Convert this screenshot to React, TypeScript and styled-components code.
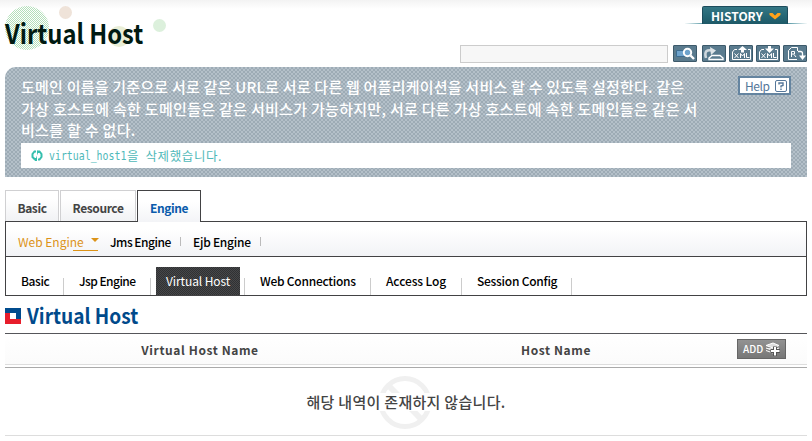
import React from "react";
import styled, { createGlobalStyle } from "styled-components";

const Global = createGlobalStyle`
  * { box-sizing: border-box; }
  body { margin: 0; background: #fff; color: #000; font-family: "Noto Sans CJK KR", "Noto Sans", sans-serif; font-size: 12px; overflow: hidden; }
  svg { display: block; }
`;

const Page = styled.div`
  width: 812px;
  height: 441px;
  padding: 0 5px;
  background: linear-gradient(#f3f3f3, #fff 9px);
`;

const Header = styled.header`
  position: relative;
  height: 67px;
  display: flex;
  justify-content: space-between;
`;
const Bubbles = styled.svg`
  position: absolute;
  left: -5px;
  top: 0;
`;
const Title = styled.h1`
  position: relative;
  margin: 13px 0 0;
  height: 40px;
  font-size: 27px;
  line-height: 40px;
  font-weight: 700;
  transform: scaleX(0.88);
  transform-origin: 0 50%;
  color: #001a12;
  white-space: nowrap;
`;
const HeaderRight = styled.div`
  display: flex;
  flex-direction: column;
  align-items: flex-end;
  padding-top: 6px;
`;
const HistoryBar = styled.div`
  width: 122px;
  height: 18px;
  padding-left: 17px;
  border-bottom: 1px solid;
  border-image: linear-gradient(90deg, #fff, #5e9da9 15%, #5e9da9 85%, #fff) 1;
`;
const HistoryTab = styled.button`
  display: flex;
  align-items: center;
  justify-content: space-between;
  width: 86px;
  height: 18px;
  padding: 1px 6px 0 8px;
  border: 1px solid #1d4c5c;
  border-bottom: 0;
  border-radius: 2px 2px 0 0;
  background: linear-gradient(#347684, #286a78 45%, #1e5967);
  color: #fff;
  font: 700 12px/14px "Noto Sans CJK KR", sans-serif;
  letter-spacing: 0px;
`;
const Tools = styled.div`
  display: flex;
  margin-top: 21px;
`;
const Search = styled.input`
  width: 208px;
  height: 18px;
  margin-right: 5px;
  border: 1px solid #ccc;
  background: #f7f7f7;
`;
const Tool = styled.button<{ $gap: number }>`
  width: 24px;
  height: 17px;
  padding: 0;
  margin-left: ${(p) => p.$gap}px;
  border: 1px solid #3d5a6b;
  border-radius: 1px;
  background: #5a7b8e;
`;

const Intro = styled.section`
  position: relative;
  height: 110px;
  padding: 10px 16px 0;
  border-radius: 11px 0 0 0;
  background: conic-gradient(#9dabb5 25%, #b4c0c9 0 50%, #9dabb5 0 75%, #b4c0c9 0) 0 0 / 4px 4px;
`;
const IntroLine = styled.div<{ $ls: number }>`
  height: 21.5px;
  font-size: 15px;
  line-height: 20px;
  font-weight: 500;
  letter-spacing: ${(p) => p.$ls}px;
  color: #fff;
  white-space: nowrap;
`;
const Help = styled.button`
  position: absolute;
  right: 16px;
  top: 9px;
  display: flex;
  align-items: center;
  justify-content: space-between;
  width: 53px;
  height: 19px;
  padding: 0 2px 0 5px;
  border: 2px solid #6484a0;
  background: #fff;
  color: #55779a;
  font: 400 12px/15px "Noto Sans CJK KR", sans-serif;
  letter-spacing: -0.4px;
`;
const Message = styled.div`
  display: flex;
  align-items: center;
  gap: 6px;
  height: 25px;
  margin-top: 1.5px;
  padding-left: 10px;
  background: #fff;
  color: #4fb9b9;
  line-height: 25px;
  white-space: pre;
`;
const MessageText = styled.span`
  display: flex;
`;
const HostId = styled.span`
  width: 78px;
  font: 12px/26px "DejaVu Sans Mono", monospace;
  transform: scaleX(0.824);
  transform-origin: 0 50%;
`;
const MessageKorean = styled.span`
  font-size: 12.5px;
  font-weight: 400;
  letter-spacing: 0.6px;
  word-spacing: 3px;
`;

const Tabs = styled.nav`
  display: flex;
  gap: 1px;
  height: 32px;
  margin-top: 13px;
`;
const Tab = styled.a<{ $w: number; $active?: boolean }>`
  width: ${(p) => p.$w}px;
  height: ${(p) => (p.$active ? 32 : 31)}px;
  position: relative;
  text-align: center;
  font-size: 12px;
  line-height: 33px;
  font-weight: 700;
  letter-spacing: -0.4px;
  color: ${(p) => (p.$active ? "#0a5bab" : "#444")};
  border: 1px solid ${(p) => (p.$active ? "#424244" : "#d0d0d2")};
  border-bottom: 0;
  background: ${(p) => (p.$active ? "linear-gradient(#fff 35%, #f3f4f7)" : "linear-gradient(#fff 25%, #f1f2f4)")};
`;
const Menus = styled.div`
  height: 75px;
  margin-top: -1px;
  border: 1px solid #424244;
`;
const EngineRow = styled.div`
  display: flex;
  height: 35px;
  border-bottom: 1px solid #424244;
  background: linear-gradient(#fff 20%, #f2f3f6);
`;
const EngineItem = styled.a<{ $w: number; $ls: number; $active?: boolean }>`
  position: relative;
  width: ${(p) => p.$w}px;
  padding-left: 12px;
  font-size: 12px;
  line-height: 40px;
  font-weight: ${(p) => (p.$active ? 400 : 500)};
  letter-spacing: ${(p) => p.$ls}px;
  color: ${(p) => (p.$active ? "#dc9318" : "#000")};
  white-space: nowrap;
`;
const Divider = styled.i`
  position: absolute;
  right: 0;
  top: 15px;
  width: 1px;
  height: 9px;
  background: #bbb;
`;
const Marker = styled.svg`
  position: absolute;
  left: 67px;
  top: 15px;
`;
const PageRow = styled.div`
  display: flex;
  align-items: flex-end;
  height: 38px;
`;
const PageItem = styled.a<{ $w: number; $ls: number; $active?: boolean }>`
  width: ${(p) => p.$w}px;
  height: 28px;
  margin-left: ${(p) => (p.$active ? 5 : 0)}px;
  padding-left: ${(p) => (p.$active ? 10 : 15)}px;
  font-size: 12px;
  line-height: 28px;
  font-weight: ${(p) => (p.$active ? 400 : 500)};
  letter-spacing: ${(p) => p.$ls}px;
  white-space: nowrap;
  color: ${(p) => (p.$active ? "#fff" : "#000")};
  background: ${(p) =>
    p.$active
      ? "conic-gradient(#303133 25%, #464749 0 50%, #303133 0 75%, #464749 0) 0 0 / 2px 2px"
      : "linear-gradient(#ccc, #ccc) 100% 100% / 1px 17px no-repeat"};
`;
const Rule = styled.i`
  width: 1px;
  height: 17px;
  margin-left: 4px;
  background: #ccc;
`;

const SectionHead = styled.div`
  display: flex;
  align-items: center;
  gap: 6px;
  height: 37px;
  padding-top: 3px;
`;
const SectionTitle = styled.h2`
  margin: 0;
  font-size: 21px;
  line-height: 30px;
  padding-bottom: 2px;
  font-weight: 700;
  transform: scaleX(0.91);
  transform-origin: 0 50%;
  color: #004a8b;
`;
const TableHead = styled.div`
  display: grid;
  grid-template-columns: 390px 322px 90px;
  align-items: center;
  height: 32px;
  border-top: 1px solid #55565a;
  border-bottom: 1px solid #ddd;
  background: linear-gradient(#fff, #fbfbfb);
  color: #444;
  font-weight: 700;
  text-align: center;
  letter-spacing: 0.6px;
`;
const Add = styled.button`
  display: flex;
  align-items: center;
  gap: 2px;
  width: 49px;
  height: 20px;
  margin-left: 20px;
  padding: 0 0 0 5px;
  border: 1px solid #666;
  background: linear-gradient(#929292, #777);
  color: #fff;
  font: 500 10px/18px "Noto Sans CJK KR", sans-serif;
`;
const Empty = styled.div`
  position: relative;
  height: 69px;
  margin-top: 2px;
  border-top: 1px solid #aaa;
  border-bottom: 1px solid #ddd;
  text-align: center;
  font-size: 15px;
  font-weight: 500;
  line-height: 68px;
  letter-spacing: 0.3px;
  color: #444;
`;
const NoEntry = styled.svg`
  position: absolute;
  left: 373px;
  top: 7px;
`;
const EmptyText = styled.span`
  position: relative;
  background: linear-gradient(#fff, #fff) 0 50% / 100% 18px no-repeat;
`;

const Xml = () => (
  <g stroke="#fff" fill="none">
    <path d="M7 3.500H4.500L2.500 6v7.500h18v-10H18" />
    <path d="M4.500 7.500l4 4.500M8.500 7.500l-4 4.500M10.500 12V7.500l2 2.500 2-2.500V12M16.500 7v4.500h3" />
  </g>
);

const toolIcons = [
  {
    gap: 0,
    art: (
      <g>
        <path d="M2.500 4.500h8v6h-8z" fill="#6ea3cc" stroke="#3b6c91" />
        <path d="M16.500 9.500l3.500 3.500" stroke="#fff" strokeWidth="2.400" />
        <circle cx="13.500" cy="6.500" r="3.700" fill="#6ea3cc" stroke="#fff" strokeWidth="2" />
      </g>
    ),
  },
  {
    gap: 5,
    art: (
      <g fill="none">
        <path d="M3 12C1 5 4 3.500 9 4.500" strokeWidth="2.600" stroke="#ced7dc" />
        <path d="M7 1l6 3.500L8 9z" fill="#dfe5e8" />
        <path d="M9 9.500h8l3 2.500v1.500H6V12z" stroke="#fff" strokeWidth="1.400" />
      </g>
    ),
  },
  {
    gap: 3,
    art: (
      <g>
        <Xml />
        <path d="M12.500 0L17 4h-3v2.500h-3V4H8z" fill="#fff" />
      </g>
    ),
  },
  {
    gap: 3,
    art: (
      <g>
        <Xml />
        <path d="M11 0h3v2.500h3L12.500 7 8 2.500h3z" fill="#fff" />
      </g>
    ),
  },
  {
    gap: 3,
    art: (
      <g fill="none" stroke="#fff">
        <path d="M13 13.500H4.500v-9L7.500 1.500h6V5M7.500 11V5.500h3v2.500h-3M10 8.500l2 2.500" />
        <path d="M14 5.500h2.500q2 0 2 2V11" strokeWidth="1.300" />
        <path d="M15 9.500h7l-3.500 4.500z" fill="#fff" stroke="none" />
      </g>
    ),
  },
];

export default function App() {
  return (
    <>
      <Global />
      <Page>
        <Header>
          <Bubbles width="180" height="60">
            <defs>
              <pattern id="dots" width="2" height="2" patternUnits="userSpaceOnUse">
                <path d="M0 0h1v1H0zM1 1h1v1H1z" fill="#b3dfba" />
              </pattern>
            </defs>
            <circle cx="27" cy="28" r="22" fill="url(#dots)" />
            <circle cx="65.500" cy="12.500" r="6.500" fill="#efe3d9" />
            <circle cx="119" cy="36.500" r="10.500" fill="#e9eed6" />
            <circle cx="159.500" cy="25.500" r="6.500" fill="#dcf0dc" />
          </Bubbles>
          <Title>Virtual Host</Title>
          <HeaderRight>
            <HistoryBar>
              <HistoryTab>
                HISTORY
                <svg width="12" height="8">
                  <path d="M0.500 1h3L6 3.500 8.500 1h3v2L6 7.500 0.500 3z" fill="#ffa21a" />
                </svg>
              </HistoryTab>
            </HistoryBar>
            <Tools>
              <Search />
              {toolIcons.map((t, i) => (
                <Tool key={i} $gap={t.gap}>
                  <svg width="22" height="15">{t.art}</svg>
                </Tool>
              ))}
            </Tools>
          </HeaderRight>
        </Header>

        <Intro>
          <IntroLine $ls={0.22}>도메인 이름을 기준으로 서로 같은 URL로 서로 다른 웹 어플리케이션을 서비스 할 수 있도록 설정한다. 같은</IntroLine>
          <IntroLine $ls={0.3}>가상 호스트에 속한 도메인들은 같은 서비스가 가능하지만, 서로 다른 가상 호스트에 속한 도메인들은 같은 서</IntroLine>
          <IntroLine $ls={0.3}>비스를 할 수 없다.</IntroLine>
          <Message>
            <svg width="12" height="11">
              <path d="M5 1.500H3.500L1.500 4v3l2 2M7 1.500h1.500l2 2.500v3l-2 2.500H7" fill="none" stroke="#35bfae" strokeWidth="2" />
              <path d="M2 8h3V5.500L6 8v3H4zM10 3H7v2.500L6 3V0z" fill="#35bfae" />
            </svg>
            <MessageText>
              <HostId>virtual_host1</HostId>
              <MessageKorean>을 삭제했습니다.</MessageKorean>
            </MessageText>
          </Message>
          <Help>
            Help
            <svg width="12" height="12" fill="none" stroke="#55779a">
              <rect x="0.500" y="0.500" width="11" height="11" rx="1.500" />
              <path d="M4 4.500V3h4v2.500L6 6v1.500M6 8.500V10" strokeWidth="1.400" />
            </svg>
          </Help>
        </Intro>

        <Tabs>
          <Tab $w={54}>Basic</Tab>
          <Tab $w={76}>Resource</Tab>
          <Tab $w={64} $active>Engine</Tab>
        </Tabs>
        <Menus>
          <EngineRow>
            <EngineItem $w={92} $ls={0} $active>
              Web Engine
              <Marker width="26" height="15">
                <path d="M18 1h8l-4 4z" fill="#dc9318" />
                <path d="M0 13.500h25" stroke="#dc9318" />
              </Marker>
            </EngineItem>
            <EngineItem $w={83} $ls={-0.5}>Jms Engine<Divider /></EngineItem>
            <EngineItem $w={80} $ls={-0.25}>Ejb Engine<Divider /></EngineItem>
          </EngineRow>
          <PageRow>
            <PageItem $w={58} $ls={-0.4}>Basic</PageItem>
            <PageItem $w={87} $ls={-0.55}>Jsp Engine</PageItem>
            <PageItem $w={84} $ls={-0.1} $active>Virtual Host</PageItem>
            <Rule />
            <PageItem $w={126} $ls={-0.25}>Web Connections</PageItem>
            <PageItem $w={91} $ls={-0.1}>Access Log</PageItem>
            <PageItem $w={110} $ls={-0.25}>Session Config</PageItem>
          </PageRow>
        </Menus>

        <SectionHead>
          <svg width="16" height="16">
            <path d="M0 0h16v11h-5V5H0z" fill="#004b8d" />
            <path d="M0 5h5v6h11v5H0z" fill="#e71d2b" />
          </svg>
          <SectionTitle>Virtual Host</SectionTitle>
        </SectionHead>
        <TableHead>
          <span>Virtual Host Name</span>
          <span>Host Name</span>
          <Add>
            ADD
            <svg width="16" height="14" fill="none" stroke="#fff">
              <path d="M1 3.500L8 1l6 2.500L8 6zM1 6l7 2.500L14 6M1 8.500L8 11" fill="#ddd" />
              <path d="M10 4.500v9.500M5.500 9h9.500" stroke="#555" strokeWidth="4" />
              <path d="M10 5v8.500M6 9h8.500" strokeWidth="2" />
            </svg>
          </Add>
        </TableHead>
        <Empty>
          <NoEntry width="54" height="56">
            <circle cx="27" cy="27.500" r="24" fill="none" stroke="#f0f0f0" strokeWidth="5" />
            <path d="M11 11l32 33" stroke="#f0f0f0" strokeWidth="6" />
          </NoEntry>
          <EmptyText>해당 내역이 존재하지 않습니다.</EmptyText>
        </Empty>
      </Page>
    </>
  );
}
